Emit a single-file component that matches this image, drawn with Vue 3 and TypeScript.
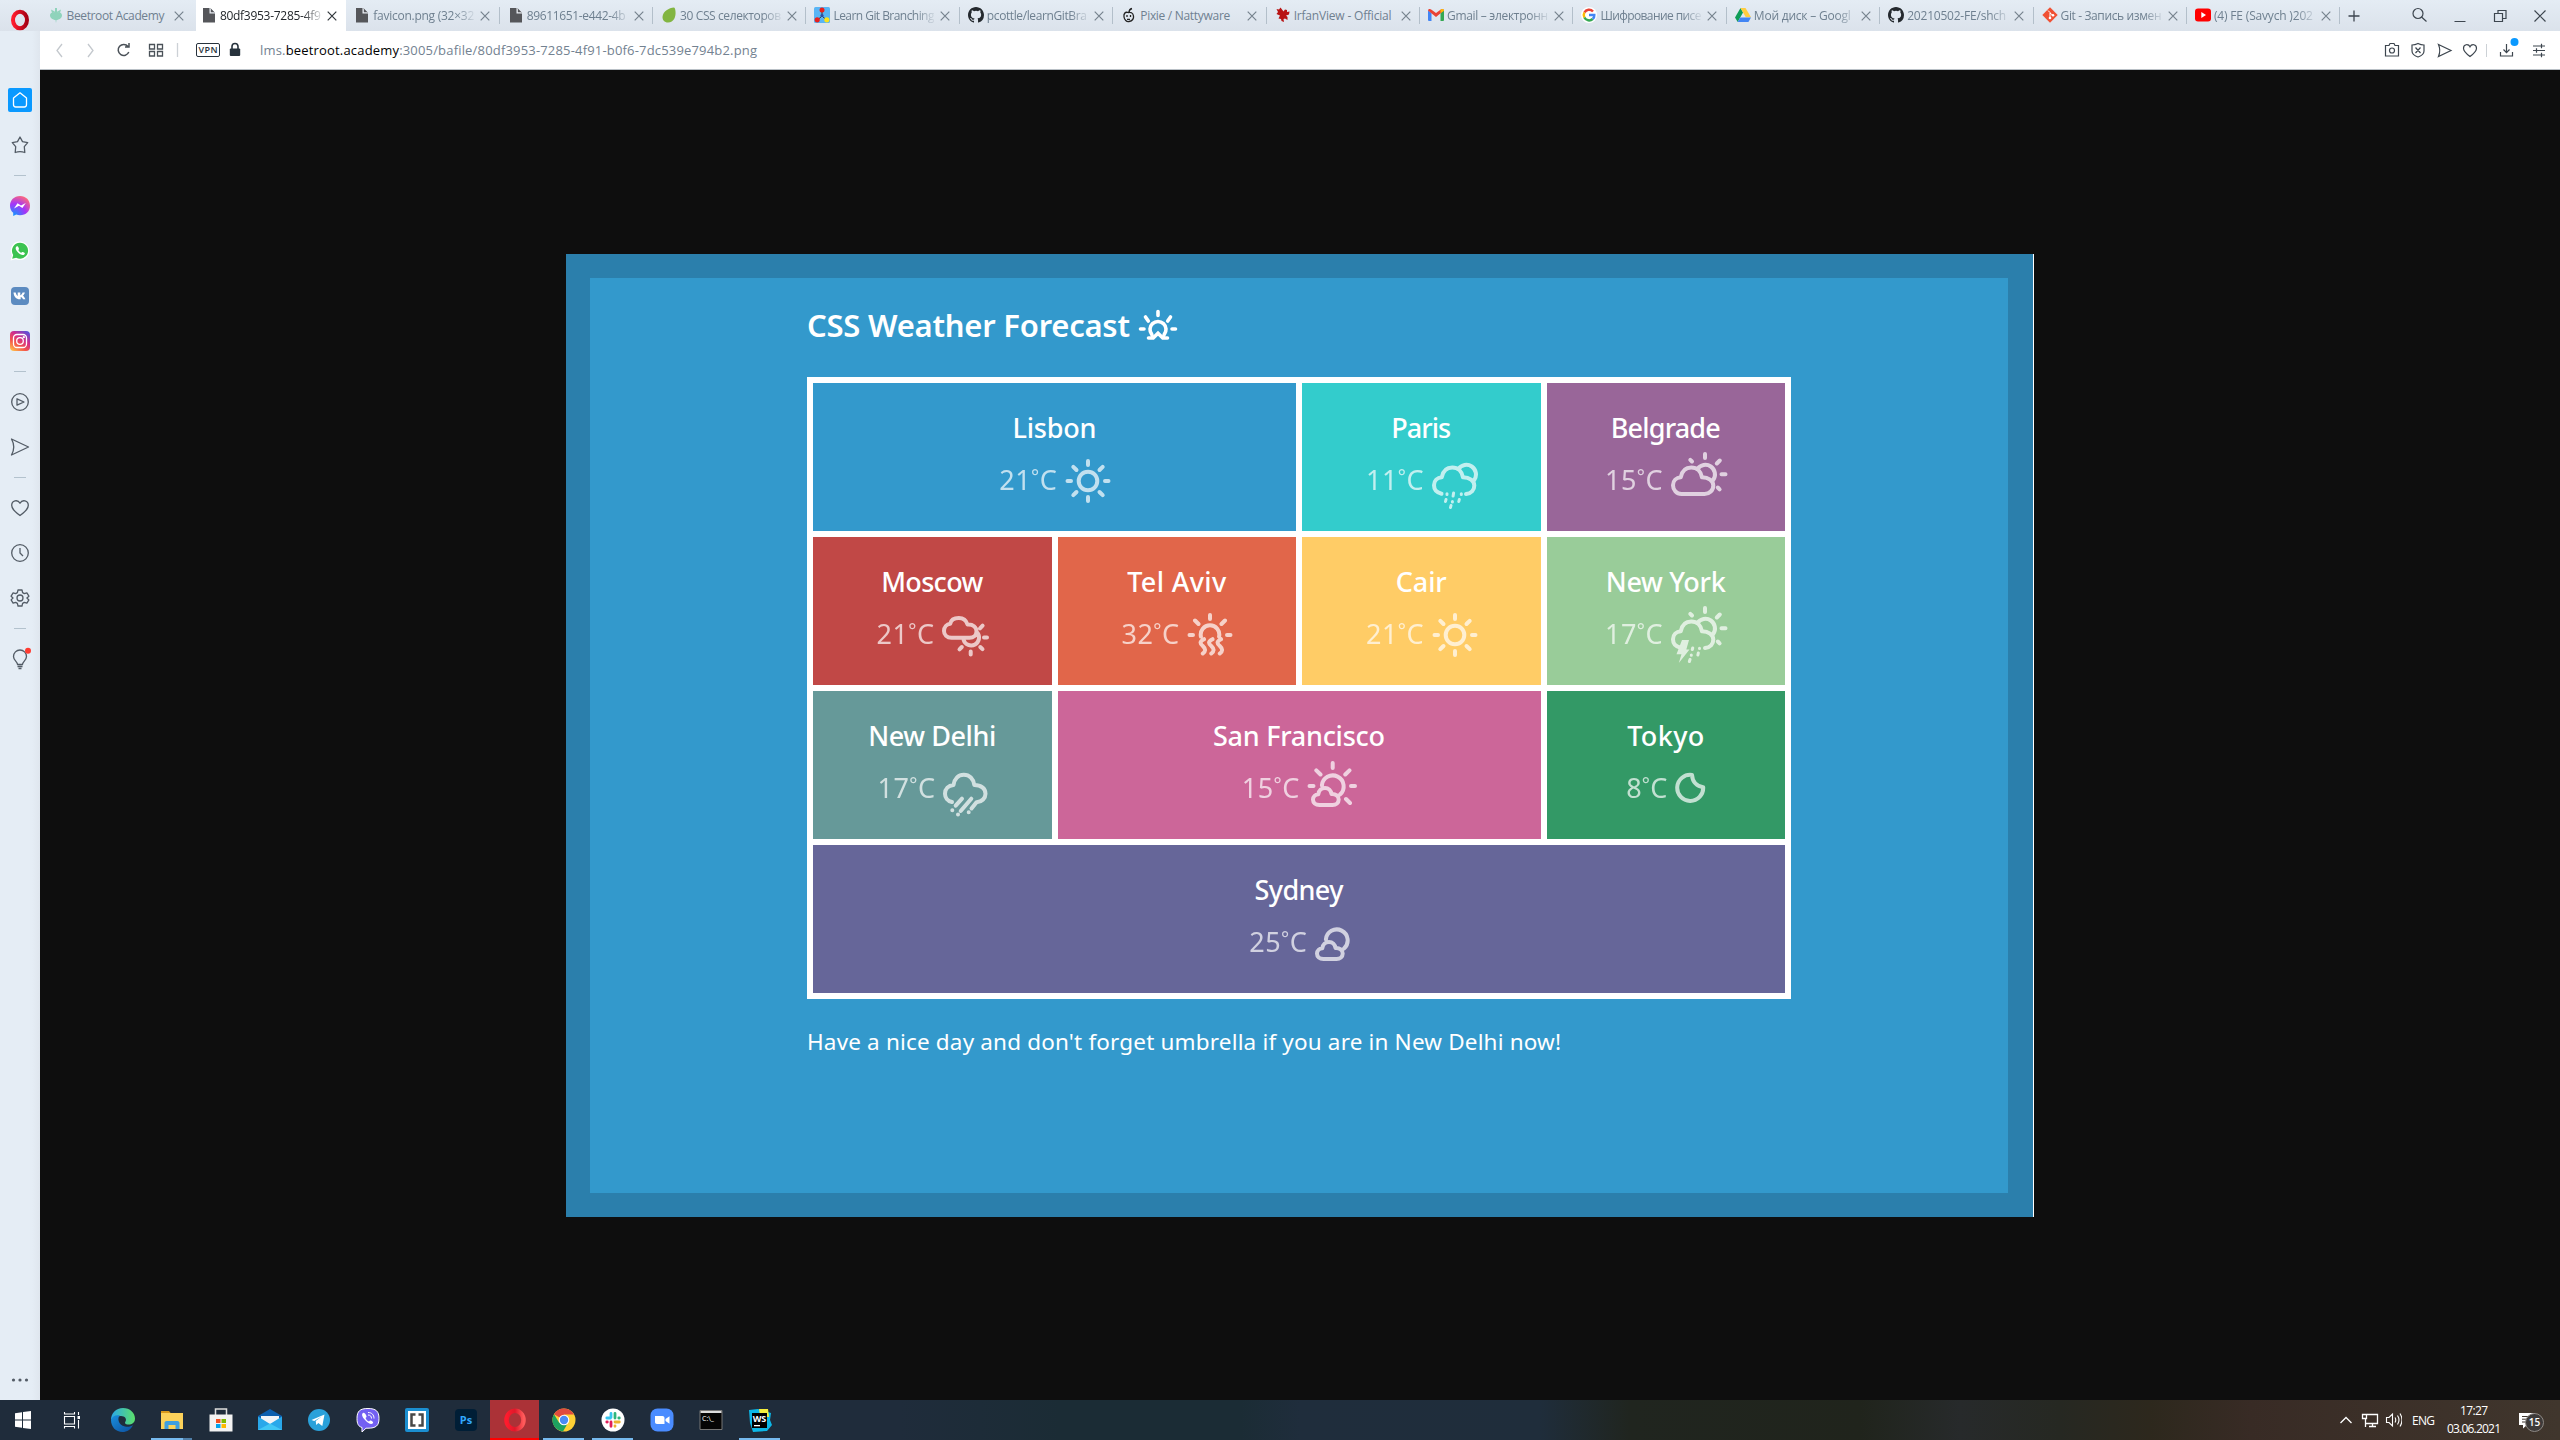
<script setup lang="ts">
import type { Directive } from 'vue'

interface Tab { title: string; width: number; icon: string; active?: boolean }
interface City { name: string; nameW: number; temp: string; tempW: number; icon: string; iconW: number; color: string; span: number }

// Spreads the letters of a label so that it takes exactly the given width.
const vFit: Directive<HTMLElement, number> = {
  mounted(el, { value }) {
    const n = (el.textContent ?? '').trim().length
    const spacing = (value - el.getBoundingClientRect().width) / Math.max(1, n - 1)
    el.style.letterSpacing = `${spacing}px`
    el.style.marginRight = `${-spacing}px`
  },
}

const tabs: Tab[] = [
  { title: 'Beetroot Academy', width: 98, icon: 'beet' },
  { title: '80df3953-7285-4f9', width: 101, icon: 'file', active: true },
  { title: 'favicon.png (32×32', width: 101, icon: 'file' },
  { title: '89611651-e442-4b', width: 99, icon: 'file' },
  { title: '30 CSS селекторов', width: 101, icon: 'envato' },
  { title: 'Learn Git Branching', width: 101, icon: 'lgb' },
  { title: 'pcottle/learnGitBra', width: 100, icon: 'github' },
  { title: 'Pixie / Nattyware', width: 90, icon: 'pixie' },
  { title: 'IrfanView - Official', width: 98, icon: 'irfan' },
  { title: 'Gmail – электронн', width: 101, icon: 'gmail' },
  { title: 'Шифрование писе', width: 101, icon: 'google' },
  { title: 'Мой диск – Googl', width: 97, icon: 'drive' },
  { title: '20210502-FE/shch', width: 99, icon: 'github' },
  { title: 'Git - Запись измен', width: 101, icon: 'git' },
  { title: '(4) FE (Savych )202', width: 99, icon: 'youtube' },
]

const cities: City[] = [
  { name: 'Lisbon', nameW: 84, temp: '21', tempW: 57.5, icon: 'sun', iconW: 46, color: '#3399cc', span: 2 },
  { name: 'Paris', nameW: 60, temp: '11', tempW: 57.5, icon: 'showers', iconW: 46, color: '#33cccc', span: 1 },
  { name: 'Belgrade', nameW: 110, temp: '15', tempW: 57.5, icon: 'cloudy-day', iconW: 57, color: '#996699', span: 1 },
  { name: 'Moscow', nameW: 102, temp: '21', tempW: 57.5, icon: 'cloud-sun', iconW: 47, color: '#c14846', span: 1 },
  { name: 'Tel Aviv', nameW: 99, temp: '32', tempW: 57.5, icon: 'heat', iconW: 46, color: '#e1664a', span: 1 },
  { name: 'Cair', nameW: 51, temp: '21', tempW: 57.5, icon: 'sun', iconW: 46, color: '#ffcc66', span: 1 },
  { name: 'New York', nameW: 120, temp: '17', tempW: 57.5, icon: 'storm', iconW: 57, color: '#99cc99', span: 1 },
  { name: 'New Delhi', nameW: 128, temp: '17', tempW: 57.5, icon: 'rain', iconW: 45, color: '#669999', span: 1 },
  { name: 'San Francisco', nameW: 172, temp: '15', tempW: 57.5, icon: 'small-cloud-sun', iconW: 50, color: '#cc6699', span: 2 },
  { name: 'Tokyo', nameW: 77, temp: '8', tempW: 41, icon: 'moon', iconW: 31, color: '#339966', span: 1 },
  { name: 'Sydney', nameW: 89, temp: '25', tempW: 57.5, icon: 'two-clouds', iconW: 35, color: '#666699', span: 4 },
]

const side = ['home', 'star', '-', 'messenger', 'whatsapp', 'vk', 'instagram', '-', 'player', 'send', '-', 'heart', 'clock', 'gear', '-', 'bulb']
const apps = ['start', 'taskview', 'edge', 'explorer', 'store', 'mail', 'telegram', 'viber', 'brackets', 'ps', 'opera', 'chrome', 'slack', 'zoom', 'cmd', 'ws']
const running = ['explorer', 'chrome', 'slack', 'ws']
</script>

<template>
  <div class="screen">
    <div class="tabbar">
      <svg class="opera" width="20" height="22" viewBox="0 0 20 22">
        <defs><linearGradient id="og" x1="0" x2="1"><stop offset="0" stop-color="#ff1b2d" /><stop offset="1" stop-color="#a70014" /></linearGradient></defs>
        <ellipse cx="10" cy="11" rx="7" ry="8.3" fill="none" stroke="url(#og)" stroke-width="4" />
      </svg>
      <div class="tabs">
        <div v-for="(t, i) in tabs" :key="i" class="tab" :class="{ active: t.active, edge: i === 0 }">
          <svg class="fav" width="16" height="16" viewBox="0 0 16 16">
            <g v-if="t.icon === 'beet'" fill="#8fd3bb"><path d="M7 1h2v4H7z" /><path d="M3 2.5 7.5 5 4 6zM13 2.5 8.500 5 12 6z" /><path d="M2 8.500C2 5.500 5 5 8 5s6 .5 6 3.500S10 13 8.500 13L8 16l-.5-3C6 13 2 11.500 2 8.500z" /></g>
            <g v-else-if="t.icon === 'file'"><path d="M2 1h7l5 5v9.500H2z" fill="#55565a" /><path d="M8.500.5v6H14.500z" fill="#e9edf3" /><path d="M9.800 1.500 13.500 5.300H9.800z" fill="#55565a" /></g>
            <path v-else-if="t.icon === 'envato'" d="M13 .5C8 1 2 4 1.500 10c0 3 2 5.500 5.500 5.500 6 0 8-6 7.500-11C14.400 3 14 .5 13 .5z" fill="#82b541" />
            <g v-else-if="t.icon === 'lgb'"><rect width="16" height="16" rx="1.500" fill="#58b5f5" /><path d="M8 3v6L3.500 13M8 9l4.500 4" stroke="#333" fill="none" /><circle cx="8" cy="3" r="2.500" fill="#e8201c" /><circle cx="8" cy="8.500" r="1.600" fill="#2a50a8" /><circle cx="3.200" cy="12.800" r="2.600" fill="#e8201c" /><circle cx="12.800" cy="12.800" r="2.600" fill="#f8e31c" /></g>
            <path v-else-if="t.icon === 'github'" fill="#24292e" d="M8 0C3.580 0 0 3.580 0 8c0 3.540 2.290 6.530 5.470 7.590.4.070.55-.17.55-.38v-1.490c-2.010.37-2.530-.49-2.690-.94-.09-.23-.48-.94-.82-1.130-.28-.15-.68-.52-.01-.53.63-.01 1.080.58 1.230.82.72 1.210 1.870.87 2.330.66.07-.52.28-.87.51-1.070-1.780-.2-3.640-.89-3.640-3.950 0-.87.31-1.590.82-2.150-.08-.2-.36-1.020.08-2.120 0 0 .67-.21 2.200.82a7.600 7.600 0 0 1 4 0c1.530-1.040 2.200-.82 2.200-.82.44 1.100.16 1.920.08 2.120.51.56.82 1.270.82 2.150 0 3.070-1.870 3.750-3.650 3.950.29.25.54.73.54 1.480v2.200c0 .21.15.46.55.38A8 8 0 0 0 16 8c0-4.420-3.580-8-8-8z" />
            <g v-else-if="t.icon === 'pixie'" fill="none" stroke="#222" stroke-width="1.300"><path d="M7 5.500C4 4.500 2.500 7 3 10s2.500 5 5 4.500 5-2 4.500-5.500-3-4-5.500-3.500zM8 5.500C8 3 9 2 11 1.500" /><path d="M6 8v2M9.500 8v2M6 12.300h3" /></g>
            <path v-else-if="t.icon === 'irfan'" fill="#b81414" d="m1.500 2 2.500.500L5.500.5l1.500 2 1.500 2 1.500-2 2 .5v2l2.500-.5-.5 3-3 1 1.500 1.500v3l-2.500-1.500-1.500.5.500 3-2.500-1L6 12l-2.500-.5L5 8.500 1.500 7 3 5z" />
            <g v-else-if="t.icon === 'gmail'"><path fill="#4285f4" d="M0 3.500 3.500 6v8H1a1 1 0 0 1-1-1z" /><path fill="#34a853" d="M16 3.500 12.500 6v8H15a1 1 0 0 0 1-1z" /><path fill="#ea4335" d="M0 3.500C0 2 2 1.500 3.500 2.700L8 6l4.500-3.300C14 1.500 16 2 16 3.500L8 10z" /><path fill="#fbbc04" d="M12.500 6V2.700C14 1.500 16 2 16 3.700z" /></g>
            <g v-else-if="t.icon === 'google'" fill="none" stroke-width="2.500"><circle cx="8" cy="8" r="8" fill="#fff" /><path stroke="#ea4335" d="M12 4.500A5.300 5.300 0 0 0 3.400 5.500" /><path stroke="#fbbc05" d="M3.400 5.500a5.300 5.300 0 0 0 0 5" /><path stroke="#34a853" d="M3.400 10.500A5.300 5.300 0 0 0 11.700 12" /><path stroke="#4285f4" d="M11.700 12c1.200-1 1.700-2.500 1.600-3.900H8" /></g>
            <g v-else-if="t.icon === 'drive'"><path fill="#0f9d58" d="M5.500 1 0 10.500 2.700 15 8 5.500z" /><path fill="#ffcd40" d="M5.500 1h5L16 10.300h-5.200z" /><path fill="#4285f4" d="M5.300 10.500H16L13.400 15H2.700z" /></g>
            <g v-else-if="t.icon === 'git'"><path fill="#f05033" d="m8 .3 7.700 7.700L8 15.700.3 8z" /><path d="M6 3.500 8 5.500v6M8 6l3 2.500" stroke="#fff" fill="none" /><circle cx="8" cy="11" r="1.300" fill="#fff" /><circle cx="11" cy="8.300" r="1.300" fill="#fff" /></g>
            <g v-else><rect y="1.500" width="16" height="13" rx="3" fill="#f00" /><path d="m6.300 5 4.700 3-4.700 3z" fill="#fff" /></g>
          </svg>
          <div class="title" :class="{ fade: t.width > 98 || t.icon === 'drive' }"><span v-fit="t.width">{{ t.title }}</span></div>
          <svg class="x" width="10" height="10" viewBox="0 0 10 10"><path d="m.7.7 8.600 8.600M9.300.7.7 9.300" /></svg>
        </div>
      </div>
      <svg class="plus" width="12" height="12" viewBox="0 0 12 12"><path d="M6 .5v11M.5 6h11" /></svg>
      <svg class="win" width="150" height="30" viewBox="0 0 150 30">
        <circle cx="13" cy="12.500" r="5" /><path d="m16.500 16 5 4.500M49.500 20.500h11M89.500 12.500h8v8h-8zM93 12.500v-3h8v8h-3.500M129.500 9.500l11 11M140.500 9.500l-11 11" />
      </svg>
    </div>

    <div class="middle">
      <aside class="sidebar">
        <template v-for="(s, i) in side" :key="i">
          <hr v-if="s === '-'">
          <svg v-else class="si" width="24" height="24" viewBox="0 0 24 24">
            <g v-if="s === 'home'"><rect width="24" height="24" rx="2" fill="#0a99ff" stroke="none" /><path d="M5.500 10 12 4.800 18.500 10v6.500c0 1.500-.8 2.500-2.300 2.500H7.800c-1.500 0-2.300-1-2.300-2.500z" stroke="#fff" /></g>
            <path v-else-if="s === 'star'" d="m12 4 2.500 4.600 5.200 1-3.400 4.100.5 5.800q-4.800-1.600-9.600 0l.5-5.800-3.400-4.100 5.200-1z" />
            <g v-else-if="s === 'messenger'" stroke="none">
              <defs><radialGradient id="mg" cx=".2" cy="1" r="1.100"><stop offset="0" stop-color="#0a9bff" /><stop offset=".55" stop-color="#a334fa" /><stop offset="1" stop-color="#ff6a78" /></radialGradient></defs>
              <path d="M12 2C6 2 2 6.300 2 11.700c0 2.900 1.200 5.400 3.200 7V22l3-1.400c1.200.5 2.500.6 3.800.6 6 0 10-4.100 10-9.500S18 2 12 2z" fill="url(#mg)" /><path d="m6 14.600 3.500-5.300 3.500 2.300 4.800-2.500-3.400 5-3.400-2.300z" fill="#fff" />
            </g>
            <g v-else-if="s === 'whatsapp'" stroke="none"><path d="M12 2.500a9 9 0 0 0-8 13.700L2.500 21.500 8 20.200A9.300 9.300 0 1 0 12 2.500z" fill="#fff" /><path d="M12 3.700a8 8 0 0 0-6.800 12.200l-1 3.800 4-1A8 8 0 1 0 12 3.700z" fill="#3cc351" /><path d="M8.500 7.500c-1.500 1-1 3.500 1.300 5.800s5 3.700 6.500 2.200c1-1 .7-1.500-.8-2.200s-1.500 0-2.200.5c-1-.3-2.500-1.500-3-2.800 1-.8.8-1.200.3-2.300s-1-1.800-2.100-1.200z" fill="#fff" /></g>
            <g v-else-if="s === 'vk'" stroke="none"><rect x="3" y="3" width="18" height="18" rx="4" fill="#5c8bc0" /><path d="M5.500 8.500h2.200c.4 1.800 1.200 3.300 2 3.500V8.500h2.600v2.800c1-.2 1.800-1.500 2.300-2.800h2.300c-.3 1.300-1.200 2.600-2 3.200 1 .7 2 1.800 2.500 3.600h-2.400c-.4-1.200-1.300-2-2.300-2.300v2.300h-1c-3.500 0-5.800-2.400-6.200-6.800z" fill="#fff" /></g>
            <g v-else-if="s === 'instagram'">
              <defs><linearGradient id="ig" x1=".1" y1="1" x2=".8" y2="0"><stop offset="0" stop-color="#ffc24a" /><stop offset=".35" stop-color="#f4544b" /><stop offset=".65" stop-color="#d02e8c" /><stop offset="1" stop-color="#5d4fd8" /></linearGradient></defs>
              <rect x="2" y="2" width="20" height="20" rx="4" fill="url(#ig)" stroke="none" /><rect x="5.500" y="5.500" width="13" height="13" rx="3.500" stroke="#fff" /><circle cx="12" cy="12" r="3.300" stroke="#fff" /><circle cx="15.800" cy="8.200" r=".5" stroke="#fff" />
            </g>
            <g v-else-if="s === 'player'"><circle cx="12" cy="12" r="8.300" /><path d="M9 8.800v6.400l7-3.200z" /></g>
            <path v-else-if="s === 'send'" d="M3.500 4 20.500 12l-17 8Q8 12 3.500 4z" />
            <path v-else-if="s === 'heart'" d="M12 19.500C7 16 3.700 13 3.700 9.300c0-4.800 6-6.300 8.300-2 2.300-4.300 8.300-2.800 8.300 2 0 3.700-3.300 6.700-8.300 10.200z" />
            <g v-else-if="s === 'clock'"><circle cx="12" cy="12" r="8.300" /><path d="M12 7v5l3 3" /></g>
            <g v-else-if="s === 'gear'">
              <circle cx="12" cy="12" r="3" /><path d="M10 4h4l.6 2.600 1.700 1 2.600-.8 2 3.400-2 1.800v.1l2 1.800-2 3.300-2.600-.8-1.700 1L14 20h-4l-.6-2.600-1.700-1-2.600.8-2-3.300L5 12l-1.900-1.800 2-3.400 2.600.8 1.700-1z" />
            </g>
            <g v-else><path d="M9.500 17.500c0-3-4-4-4-8a6.500 6.500 0 0 1 13 0c0 4-4 5-4 8zM9.500 19.500h5M10.500 21.500h3" /><circle cx="20" cy="3.800" r="3" fill="#ff3b30" stroke="none" /></g>
          </svg>
        </template>
        <svg class="dots" width="18" height="6" viewBox="0 0 18 6"><circle cx="2.500" cy="3" r="1.600" /><circle cx="9" cy="3" r="1.600" /><circle cx="15.500" cy="3" r="1.600" /></svg>
      </aside>

      <div class="page">
        <div class="toolbar">
          <svg class="nav" width="142" height="38" viewBox="0 0 142 38">
            <g stroke="#c3c8cd"><path d="m22 13-5 6.500 5 6.500M48 13l5 6.500-5 6.500" /></g>
            <g stroke="#4a5158"><path d="M88 15.500a5.500 5.500 0 1 0 .8 5.500M89 12v4h-4" stroke-width="1.500" /><path d="M109.500 13.500h5v4.500h-5zM117.500 13.500h5v4.500h-5zM109.500 20.500h5V25h-5zM117.500 20.500h5V25h-5z" /></g>
            <path d="M137.500 12v14" stroke="#ccd1d6" />
          </svg>
          <span class="vpn"><span v-fit="19">VPN</span></span>
          <svg class="lock" width="12" height="16" viewBox="0 0 12 16"><path d="M3 7V4.500a3 3 0 0 1 6 0V7" fill="none" stroke="#27323c" stroke-width="1.600" /><rect x=".8" y="6.500" width="10.400" height="7.500" rx="1" fill="#27323c" /></svg>
          <span class="url"><span v-fit="497">lms.<b>beetroot.academy</b>:3005/bafile/80df3953-7285-4f91-b0f6-7dc539e794b2.png</span></span>
          <svg class="tools" width="180" height="38" viewBox="0 0 180 38">
            <g fill="none" stroke="#3d464f" stroke-width="1.200">
              <path d="M5.500 14.500H9l1-2h4l1 2h3.500v10.500h-13z" /><circle cx="12" cy="19.500" r="2.500" />
              <path d="M38 12.500q3 1.500 6 1.500v6q0 4-6 6-6-2-6-6v-6q3 0 6-1.500zM35.500 16.500l5 5.500M40.500 16.500l-5 5.500" />
              <path d="M58.500 13.500 71 19.500l-12.500 6q2.500-6 0-12z" /><path d="M90 25.500c-4-3-6.500-5.500-6.500-8.300 0-4 4.800-4.800 6.500-1.400 1.700-3.400 6.500-2.600 6.500 1.400 0 2.800-2.500 5.300-6.500 8.300z" />
              <path d="M126.500 13v8.500M123.500 18.500l3 3.200 3-3.200M120.500 21v4h12v-4M153 15h12M153 19.500h12M153 24h12M161.500 12.800v4.400M156.500 17.300v4.400M161.500 21.800v4.400" />
            </g>
            <path d="M106.500 13v13" stroke="#ccd1d6" /><circle cx="134.500" cy="11" r="4" fill="#0a99ff" />
          </svg>
        </div>

        <div class="viewer">
          <div class="forecast">
            <div class="content">
              <h1><span v-fit="323">CSS Weather Forecast</span>
                <svg width="40" height="32" viewBox="0 0 40 32"><g><path d="M13.800 25.500A8 8 0 1 1 26.200 25.500M10.500 29h4.700l4.800-4.800 4.800 4.800h4.700M20 2.500v4M2.500 20h3.500M34 20h3.500M7.500 8l2.800 4M32.500 8l-2.800 4" /></g></svg>
              </h1>
              <div class="grid">
                <div v-for="c in cities" :key="c.name" class="cell" :style="{ backgroundColor: c.color, gridColumn: `span ${c.span}` }">
                  <div class="name"><span v-fit="c.nameW">{{ c.name }}</span></div>
                  <div class="reading">
                    <span class="temp"><span v-fit="c.tempW">{{ c.temp }}<i>°</i>C</span></span>
                    <svg :width="c.iconW" height="64" :viewBox="`0 0 ${c.iconW} 64`">
                      <g v-if="c.icon === 'sun'"><circle cx="23" cy="32" r="9.300" /><path d="M23 12v4M23 48v4M2.500 32H6M40 32h3.500M8.300 17.800l3.200 3.200M37.700 17.800 34.500 21M8.300 46.200l3.200-3.200M37.700 46.200 34.500 43" /></g>
                      <g v-else-if="c.icon === 'cloud-sun'"><path d="M9.500 34.800C5 34.800 2 31.800 2 28c0-4 2.800-6.800 6.200-7.200C9 17 12.500 15 16.800 15c4.200 0 7.500 2.500 8.700 6.500 5.500-.5 9 3 9 6.800 0 3.700-3 6.500-7 6.500zM35 29.300A7.900 7.900 0 1 1 21.600 37M38 25.300l2.600-2.600M42 34.600h3M38.300 44l2.200 2.200M28.700 48.500v3M19.800 44l-2.300 2.300" /></g>
                      <g v-else-if="c.icon === 'heat'"><path d="M13.900 33.500A9.300 9.300 0 1 1 32.100 33.500M23 12v4M2.500 32H6M40 32h3.500M8 17.500l3.500 3.500M38 17.500 34.500 21M17 36.200c-4.500 2.300-4.200 4.300-1.200 6.800 3.200 3 3 5 0 7.500M25.500 36.200c-4.500 2.300-4.200 4.300-1.200 6.800 3.200 3 3 5 0 7.500M34 36.200c-4.500 2.300-4.200 4.300-1.200 6.800 3.200 3 3 5 0 7.500" /></g>
                      <g v-else-if="c.icon === 'rain'"><path d="M9 45C4.500 44 2 40.500 2 36.700 2 32 5.500 28.500 10.500 28c1-6.500 5-10.300 10.300-10.300 5.700 0 9.500 4.100 10.500 10.300C38 28 42.500 31.500 42.500 36.700c0 4.300-3.500 8.300-9 8.600l-5 6.200M19 41.700l-6.300 7M28.300 41.700 17.700 54M9.300 53.300v.01M15 57.500v.01M25.700 55.300v.01" /></g>
                      <g v-else-if="c.icon === 'small-cloud-sun' || c.icon === 'two-clouds'" :transform="c.icon === 'two-clouds' ? 'translate(-4 0)' : undefined">
                        <path d="M14.900 28.500A10.900 10.900 0 1 1 33 37.500M12.500 48C8.500 48 6 45.800 6 42.500c0-3 2.300-5 5.300-5.300.5-3.700 3.200-6.200 6.700-6.200s6 2.500 6.500 6c4.300-.2 7.200 2 7.200 5.500 0 3.300-2.700 5.500-6.200 5.500z" />
                        <path v-if="c.icon === 'small-cloud-sun'" d="M25.700 6v5M2.500 29H6.500M44 29h4M9.300 13.300l4.200 4.200M42.500 13.300l-4.200 4.200M39 42l4 4" />
                      </g>
                      <g v-else-if="c.icon === 'moon'"><path d="M17 18A13 13 0 1 0 28.200 30.200C22 29.500 17.500 25 17 18z" /></g>
                      <g v-else>
                        <path v-if="c.icon === 'cloudy-day'" d="M10.500 45C5.500 45 2 41 2 36.300c0-4.600 3.300-7.800 7.800-8.100C11 22 15 18.500 20.300 18.500c5.700 0 9.700 4 10.700 9.800 6.500 0 11.300 3.200 11.300 8.200 0 4.800-3.800 8.500-8.800 8.500z" />
                        <path v-else d="M9.500 44.700C4.500 43.500 2 40 2 36.300c0-4.600 3.300-7.800 7.800-8.100C11 22 15 18.500 20.300 18.500c5.700 0 9.700 4 10.700 9.800 6.500 0 11.300 3.200 11.300 8.200 0 4.300-2.800 8-8.300 8.500" />
                        <path d="M26.500 20A9.500 9.500 0 1 1 42.300 30.800" />
                        <path v-if="c.icon !== 'showers'" d="M34 5v4M45.800 14.500l3-3M50.500 25.300h4M46.800 38.500l1.800 1.800M19.300 10.800l1.700 1.700" />
                        <path v-if="c.icon === 'showers'" class="drops" d="M15 44.700v.8M21.600 44l-.5 3M29.300 44.700v.8M14 50.500l-.5 2M20.400 52.500v.5M27.300 50.500l-.5 2M19 56.500l-.5 2" />
                        <template v-if="c.icon === 'storm'"><path class="solid" d="M11 37h7l-2.700 9.500h3.200L7.800 60l2.700-8.800h-5z" /><path class="drops" d="M21.700 45l-.4 1.500M20.300 52v.3M19 56.500l-.6 2M28.500 45.300v.3M27.300 50l-.4 2" /></template>
                      </g>
                    </svg>
                  </div>
                </div>
              </div>
              <p><span v-fit="754">Have a nice day and don't forget umbrella if you are in New Delhi now!</span></p>
            </div>
          </div>
        </div>
      </div>
    </div>

    <footer class="taskbar">
      <div v-for="a in apps" :key="a" class="app" :class="{ run: running.includes(a), cur: a === 'opera', multi: a === 'explorer' }">
        <svg width="24" height="24" viewBox="0 0 24 24">
          <path v-if="a === 'start'" fill="#fff" d="M4 5.200 11 4.200v7.300H4zM12 4l8-1.100v8.600h-8zM4 12.500h7v7.300l-7-1zM12 12.500h8v8.600L12 20z" />
          <g v-else-if="a === 'taskview'" fill="none" stroke="#fff" stroke-width="1.100"><path d="M4.500 8.500h10v7.500h-10zM4.500 4v2h10V4M4.500 20.500v-2h10v2M18.500 4v3M18.500 12v8.500" /><path d="M17.500 8h2.500v3h-2.500z" fill="#fff" stroke="none" /></g>
          <g v-else-if="a === 'edge'">
            <defs><linearGradient id="e1" x1="0" x2="1"><stop offset="0" stop-color="#2aa7e8" /><stop offset="1" stop-color="#5ce06a" /></linearGradient><linearGradient id="e2" x1="0" x2="1" y2="1"><stop offset="0" stop-color="#1a8fdd" /><stop offset="1" stop-color="#0c4f9e" /></linearGradient></defs>
            <path d="M0 12C0 5 5 0 12 0s12 5 12 10.500c0 4-3 6-6.500 6s-4-1.500-3-3C16 11 14 8 10 8S2 10 0 12z" fill="url(#e1)" /><path d="M0 12C1 8 5 6.500 9 7.500 6 9.500 7 17 14 18.500c3 .7 6 0 8-1.500-2 4.500-6 7-10.500 7C5 24 0 19 0 12z" fill="url(#e2)" />
          </g>
          <g v-else-if="a === 'explorer'"><path d="M1 3h8l2 2.500H1z" fill="#d99a1c" /><path d="M1 5h22v16H1z" fill="#fcd25a" /><path d="M4.500 21v-6c0-1 .7-2 2-2h11c1.300 0 2 1 2 2v6h-4v-4h-7v4z" fill="#3f9fe0" /></g>
          <g v-else-if="a === 'store'"><path d="M6.500 7V1h11v6" fill="none" stroke="#ddd" stroke-width="1.500" /><path d="M.5 6.500h23v17H.5z" fill="#f3f3f3" /><path d="M7 11h4.500v4H7z" fill="#f25022" /><path d="M12.500 11H17v4h-4.500z" fill="#7fba00" /><path d="M7 16h4.500v4H7z" fill="#00a4ef" /><path d="M12.500 16H17v4h-4.500z" fill="#ffb900" /></g>
          <g v-else-if="a === 'mail'"><path d="M0 8 12 1l12 7v14H0z" fill="#0d5fae" /><path d="M3 8h18v8H3z" fill="#f2f4f7" /><path d="M0 8.500 12 16l12-7.500V22H0z" fill="#29a8ea" /><path d="M0 22 12 15.500 24 22z" fill="#41c7f5" /></g>
          <g v-else-if="a === 'telegram'"><circle cx="12" cy="12" r="11" fill="#2aa1da" /><path d="m4.500 12 13-5.500-2.200 11.500-4-3-2 2-.6-4 6-4.500-7.500 4.500z" fill="#fff" /></g>
          <g v-else-if="a === 'viber'"><path d="M12 .5C4 .5 1 3 1 10.500 1 16 2.500 18.500 6 19.500V24l4-3.800h2c8 0 11-2.500 11-9.700S20 .5 12 .5z" fill="#7360f2" stroke="#fff" /><path d="M7 5c-2 1.300-.5 4.500 2.500 7.500s6 4.500 7.500 2.500c.8-1.200-2-3-3-2.500l-1 1c-1.500-.5-3-2-3.500-3.500l1-1C11 8 8.500 4 7 5z" fill="#fff" /><path d="M12 4.500c4 0 6 2.500 6 6M12 7c2.200 0 3.500 1.200 3.500 3.500" fill="none" stroke="#fff" /></g>
          <g v-else-if="a === 'brackets'"><rect width="24" height="24" rx="2" fill="#1b8fd1" /><rect x="3" y="3" width="18" height="18" fill="#fff" /><path d="M10.500 6.500h-4v11h4M13.500 6.500h4v11h-4" fill="none" stroke="#474747" stroke-width="2.500" /></g>
          <g v-else-if="a === 'ps'"><rect x="1" y="1" width="22" height="22" rx="4" fill="#001e36" /><text x="12" y="16" text-anchor="middle" font-size="11" font-weight="700" fill="#31a8ff">Ps</text></g>
          <g v-else-if="a === 'opera'">
            <defs><linearGradient id="oo" x1="0" x2="1"><stop offset="0" stop-color="#ff1b2d" /><stop offset=".5" stop-color="#e0182a" /><stop offset="1" stop-color="#ff5a5a" /></linearGradient></defs>
            <ellipse cx="12" cy="12" rx="8.500" ry="9.200" fill="none" stroke="url(#oo)" stroke-width="4.600" />
          </g>
          <g v-else-if="a === 'chrome'"><circle cx="12" cy="12" r="11.500" fill="#fdd035" /><path d="M12 12 2 6.200A11.500 11.500 0 0 1 22 6.500H12z" fill="#df4b3f" /><path d="M2 6.200A11.500 11.500 0 0 0 11 23.500l4-7-8-2z" fill="#1da260" /><circle cx="12" cy="12" r="5.300" fill="#fff" /><circle cx="12" cy="12" r="4.200" fill="#4a8bf5" /></g>
          <g v-else-if="a === 'slack'" stroke-width="2.800" stroke-linecap="round"><circle cx="12" cy="12" r="11.500" fill="#fff" /><path d="M10 5.500v4M5.800 10h4" stroke="#36c5f0" /><path d="M14 5.500v4.500M18.300 10h-.5" stroke="#2eb67d" /><path d="M14 14h4.300M14 18.300v-.5" stroke="#ecb22e" /><path d="M10 14v4.300M5.800 14h.5" stroke="#e01e5a" /></g>
          <g v-else-if="a === 'zoom'"><rect x=".5" y=".5" width="23" height="23" rx="7" fill="#4a8cff" /><path d="M5 8h7.500c1 0 2 .8 2 2v6H7c-1.200 0-2-.8-2-2zM15.500 11l4-2.800v7.600l-4-2.800z" fill="#fff" /></g>
          <g v-else-if="a === 'cmd'"><path d="M1 2.500h22v19H1z" fill="#050505" stroke="#777" /><path d="M1.500 3h21v2h-21z" fill="#ddd" /><text x="3" y="13" font-size="7" fill="#fff">C:\_</text></g>
          <g v-else><path d="M1 2 10 1l13 4-1 7 2 5-5 6-14 1-3-9z" fill="#0cb7e8" /><path d="m11 1 9 0 1 8-9-1z" fill="#f5ee3c" /><path d="M4 5h15v15H4z" fill="#000" /><text x="11.500" y="13.500" text-anchor="middle" font-size="9" font-weight="700" fill="#fff">WS</text><path d="M6 17h6v1.300H6z" fill="#fff" /></g>
        </svg>
      </div>
      <div class="tray">
        <svg width="64" height="24" viewBox="0 0 64 24" fill="none" stroke="#fff" stroke-width="1.300">
          <path d="m2.500 15 5.500-5.500 5.500 5.500" /><path d="M29 6.500h10.500v9H27M27.500 10v9M31 18.500h7M34.500 15.500v3" /><path d="M24.500 6.500h4v4h-4z" />
          <path d="M48.500 9.500h2.500l3.500-3.500v12L51 14.500h-2.500zM57 9.500q1.500 2.500 0 5M59.500 7.500q3 4.500 0 9M62 5.500q4 6.500 0 13" stroke-width="1.100" />
        </svg>
        <span class="lang"><span v-fit="23">ENG</span></span>
        <div class="clock"><span><span v-fit="28">17:27</span></span><span><span v-fit="54">03.06.2021</span></span></div>
        <div class="note">
          <svg width="16" height="16" viewBox="0 0 16 16"><path d="M0 0h16v12H8l-4 3.500V12H0z" fill="#fff" /><path d="M3 3.500h10M3 6.200h10M3 9h6" stroke="#403730" /></svg>
          <span class="badge">15</span>
        </div>
      </div>
    </footer>
  </div>
</template>

<style>
body { margin: 0; background: #0e0e0e; overflow: hidden; }
</style>

<style scoped>
.screen { width: 2560px; height: 1440px; display: flex; flex-direction: column; font-family: "Open Sans", "Noto Sans", sans-serif; overflow: hidden; }
svg { display: block; flex: none; }
b, i { font-weight: inherit; font-style: normal; }

.tabbar { height: 31px; flex: none; display: flex; align-items: center; background: linear-gradient(#e4ecf4, #dbe2eb); }
.opera { margin-left: 10px; margin-top: 8px; margin-right: 9.500px; }
.tabs { display: flex; height: 31px; width: 2301px; flex: none; }
.tab { box-sizing: border-box; width: 153.400px; flex: none; display: flex; align-items: center; padding: 0 9.400px 0 8px; color: #6f8090; position: relative; }
.tab::after { content: ""; position: absolute; right: 0; top: 7px; height: 17px; width: 1px; background: #b3bfca; }
.tab.edge::after, .tab.active::after { display: none; }
.tab.active { color: #23272b; background: linear-gradient(#fff, #fff) 3px 0 / 150px 100% no-repeat; }
.fav { margin-top: -1px; }
.title { flex: 1; margin: 1px 6px 0 3px; font-size: 12px; line-height: 18px; }
.title.fade { -webkit-mask-image: linear-gradient(90deg, #000 82%, rgba(0, 0, 0, .15)); mask-image: linear-gradient(90deg, #000 82%, rgba(0, 0, 0, .15)); }
.x { stroke: #77838e; stroke-width: 1.200; }
.active .x { stroke: #30363b; }
.plus { margin-left: 7px; stroke: #3d464f; stroke-width: 1.300; }
.win { margin-left: 45px; fill: none; stroke: #3d464f; stroke-width: 1.200; }

.middle { flex: 1; display: flex; min-height: 0; }
.sidebar { width: 40px; flex: none; box-sizing: border-box; background: linear-gradient(90deg, #e5edf5 80%, #dfe6ee); display: flex; flex-direction: column; align-items: center; padding-top: 57px; }
.si { fill: none; stroke: #535c66; stroke-width: 1.300; stroke-linejoin: round; margin-bottom: 21px; }
.sidebar hr { width: 12px; height: 1px; border: 0; background: #b3c2cd; margin: -3px 0 18px; flex: none; }
.dots { margin-top: auto; margin-bottom: 17px; fill: #535c66; }

.page { flex: 1; display: flex; flex-direction: column; }
.toolbar { height: 38px; flex: none; background: #fff; border-bottom: 1px solid #b9c0c6; display: flex; align-items: center; }
.nav { fill: none; stroke-width: 1.300; }
.vpn { box-sizing: border-box; width: 24px; height: 14px; border: 1px solid #27323c; border-radius: 2px; margin-left: 14px; font-size: 9px; line-height: 12px; font-weight: 600; color: #27323c; display: flex; justify-content: center; }
.vpn > span, .url > span, .name > span, .temp > span, p > span, h1 > span, .lang > span, .clock > span > span, .title > span { display: inline-block; white-space: nowrap; }
.lock { margin-left: 9px; }
.url { margin-left: 19px; font-size: 13px; line-height: 20px; color: #738291; }
.url b { color: #000; }
.tools { margin-left: auto; width: 180px; }

.viewer { flex: 1; background: #0e0e0e; padding: 184px 0 0 526px; }
.forecast { box-sizing: border-box; width: 1468px; height: 963px; border: 24px solid #2b7fac; border-right-width: 26px; background: #3399cc; position: relative; color: #fff; font-family: "Noto Sans", "Open Sans", sans-serif; }
.forecast::after { content: ""; position: absolute; right: -26px; top: -24px; bottom: -24px; width: 1px; background: #fff; }
.content { width: 984px; margin-left: 217px; }
h1 { margin: 0; height: 99px; box-sizing: border-box; padding-top: 25px; display: flex; font-size: 31px; line-height: 44px; font-weight: 600; }
h1 svg { margin: 6px 0 0 8px; }
h1 g { fill: none; stroke: #fff; stroke-width: 3.600; stroke-linecap: round; }
.grid { display: grid; grid-template-columns: repeat(4, 1fr); grid-auto-rows: 148px; gap: 6px; padding: 6px; background: #fff; }
.name { height: 66px; box-sizing: border-box; padding-top: 25px; display: flex; justify-content: center; font-size: 27px; line-height: 40px; font-weight: 500; }
.reading { height: 64px; display: flex; justify-content: center; gap: 8px; opacity: .7; padding-left: 1px; }
.temp { font-size: 27px; line-height: 40px; padding-top: 11px; }
.temp i { font-size: 19px; line-height: 0; vertical-align: 6px; }
.reading g { fill: none; stroke: #fff; stroke-width: 4; stroke-linecap: round; stroke-linejoin: round; }
.reading .drops { stroke-width: 3; }
.reading .solid { fill: #fff; stroke: none; }
p { margin: 27px 0 0; font-size: 22.500px; line-height: 32px; }

.taskbar { height: 40px; flex: none; display: flex; background: linear-gradient(90deg, #1f2c3b 0, #1f2c3b 900px, #1b2c35 1060px, #1b2c35 1240px, #1f2d3c 1300px, #1f2d3b 1540px, #20251f 1630px, #20241c 1860px, #272a2b 1960px, #262822 2060px, #2d281d 2150px, #382b25 2250px, #40362d 2560px); }
.app { box-sizing: border-box; width: 49px; height: 40px; display: flex; align-items: center; justify-content: center; position: relative; flex: none; }
.app:nth-child(-n+2) { padding-right: 3px; }
.app.run::after { content: ""; position: absolute; left: 4px; right: 4px; bottom: 0; height: 2px; background: #76b9ed; }
.app.multi::after { background: linear-gradient(90deg, #76b9ed 32px, #4f7fa8 32px); }
.app.cur { background: #ab3237; border-bottom: 2px solid #f00; padding-top: 2px; }
.tray { margin-left: auto; display: flex; align-items: center; color: #fff; font-size: 12px; }
.lang { margin-left: 10px; }
.clock { display: flex; flex-direction: column; align-items: center; width: 60px; margin-left: 9px; line-height: 18px; }
.note { position: relative; width: 41px; margin-left: 15px; padding-top: 2px; }
.badge { position: absolute; left: 6px; top: 2px; width: 17px; height: 17px; border: 1px solid #8d8884; border-radius: 50%; background: #3d3a39; font-size: 10px; line-height: 17px; text-align: center; font-weight: 600; }
</style>
